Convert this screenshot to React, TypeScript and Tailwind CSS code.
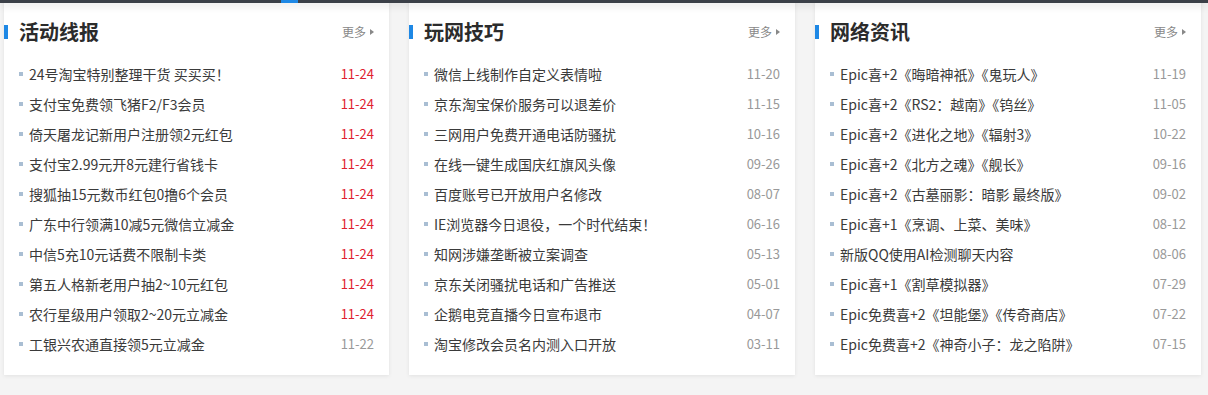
import React from 'react';

interface NewsItem {
  title: string;
  date: string;
  hot?: boolean;
}

interface NewsCardProps {
  title: string;
  items: NewsItem[];
  wide?: boolean;
}

const huodong: NewsItem[] = [
  { title: '24号淘宝特别整理干货 买买买！', date: '11-24', hot: true },
  { title: '支付宝免费领飞猪F2/F3会员', date: '11-24', hot: true },
  { title: '倚天屠龙记新用户注册领2元红包', date: '11-24', hot: true },
  { title: '支付宝2.99元开8元建行省钱卡', date: '11-24', hot: true },
  { title: '搜狐抽15元数币红包0撸6个会员', date: '11-24', hot: true },
  { title: '广东中行领满10减5元微信立减金', date: '11-24', hot: true },
  { title: '中信5充10元话费不限制卡类', date: '11-24', hot: true },
  { title: '第五人格新老用户抽2~10元红包', date: '11-24', hot: true },
  { title: '农行星级用户领取2~20元立减金', date: '11-24', hot: true },
  { title: '工银兴农通直接领5元立减金', date: '11-22' }
];

const jiqiao: NewsItem[] = [
  { title: '微信上线制作自定义表情啦', date: '11-20' },
  { title: '京东淘宝保价服务可以退差价', date: '11-15' },
  { title: '三网用户免费开通电话防骚扰', date: '10-16' },
  { title: '在线一键生成国庆红旗风头像', date: '09-26' },
  { title: '百度账号已开放用户名修改', date: '08-07' },
  { title: 'IE浏览器今日退役，一个时代结束！', date: '06-16' },
  { title: '知网涉嫌垄断被立案调查', date: '05-13' },
  { title: '京东关闭骚扰电话和广告推送', date: '05-01' },
  { title: '企鹅电竞直播今日宣布退市', date: '04-07' },
  { title: '淘宝修改会员名内测入口开放', date: '03-11' }
];

const zixun: NewsItem[] = [
  { title: 'Epic喜+2《晦暗神祇》《鬼玩人》', date: '11-19' },
  { title: 'Epic喜+2《RS2：越南》《钨丝》', date: '11-05' },
  { title: 'Epic喜+2《进化之地》《辐射3》', date: '10-22' },
  { title: 'Epic喜+2《北方之魂》《舰长》', date: '09-16' },
  { title: 'Epic喜+2《古墓丽影：暗影 最终版》', date: '09-02' },
  { title: 'Epic喜+1《烹调、上菜、美味》', date: '08-12' },
  { title: '新版QQ使用AI检测聊天内容', date: '08-06' },
  { title: 'Epic喜+1《割草模拟器》', date: '07-29' },
  { title: 'Epic免费喜+2《坦能堡》《传奇商店》', date: '07-22' },
  { title: 'Epic免费喜+2《神奇小子：龙之陷阱》', date: '07-15' }
];

const NewsCard: React.FC<NewsCardProps> = ({ title, items, wide = true }) => {
  return (
    <div className={`${wide ? 'w-[386px]' : 'w-[385px]'} h-[375px] bg-white shadow-[0_1px_4px_rgba(0,0,0,0.08)] pt-[18px] pb-4`}>
      {/* Header */}
      <div className="flex items-center h-[28px] pr-[15px]">
        <span className="w-1 h-[14px] bg-[#1e88e5]" />
        <h2 className="ml-[11px] text-[20px] leading-[28px] font-bold text-[#2b2b2b]">{title}</h2>
        <a className="ml-auto flex items-center gap-[4px] text-[12px] leading-[16px] text-[#888]">
          更多
          <span className="w-0 h-0 border-y-[3.5px] border-y-transparent border-l-[4px] border-l-[#888]" />
        </a>
      </div>

      {/* List */}
      <ul className="mt-[13px] px-[15px]">
        {items.map((item, i) => (
          <li key={i} className="flex items-center h-[30px]">
            <span className="w-1 h-1 bg-[#a9bed3] shrink-0" />
            <span className="ml-[6px] text-[14px] text-[#3a3a3a] whitespace-nowrap">{item.title}</span>
            <span className={`ml-auto text-[13px] ${item.hot ? 'text-[#e0202e]' : 'text-[#999]'}`}>{item.date}</span>
          </li>
        ))}
      </ul>
    </div>
  );
};

export default function App() {
  return (
    <div
      className="relative w-full h-[395px] bg-[#f4f4f4] overflow-hidden"
      style={{ fontFamily: '"Microsoft YaHei", "Noto Sans CJK SC", "Liberation Sans", sans-serif' }}
    >
      <div className="absolute top-0 left-0 right-0 h-[3px] bg-[#3b4048] shadow-[0_2px_8px_rgba(0,0,0,0.18)] z-10">
        <span className="absolute left-[281px] top-0 w-[17px] h-[3px] bg-[#1e88e5]" />
      </div>

      <div className="flex gap-5 pl-1">
        <NewsCard title="活动线报" items={huodong} wide={false} />
        <NewsCard title="玩网技巧" items={jiqiao} />
        <NewsCard title="网络资讯" items={zixun} />
      </div>
    </div>
  );
}
